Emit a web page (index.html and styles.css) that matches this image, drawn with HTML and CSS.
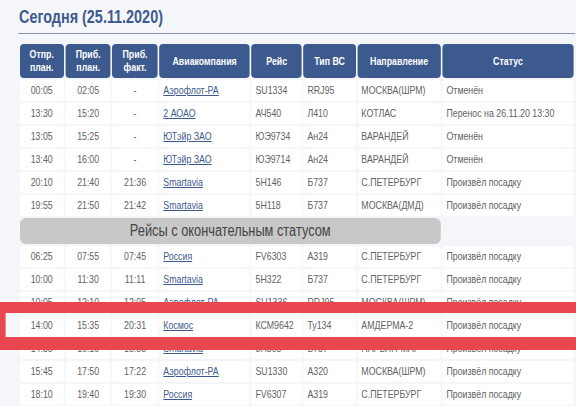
FILE: index.html
```html
<!DOCTYPE html>
<html lang="ru">
<head>
<meta charset="utf-8">
<link rel="stylesheet" href="styles.css">
</head>
<body>
<div class="page">
  <h1 class="title">Сегодня (25.11.2020)</h1>
  <table class="flights">
    <colgroup>
      <col class="c-dep"><col class="c-arr"><col class="c-fact"><col class="c-air"><col class="c-fl"><col class="c-type"><col class="c-dir"><col class="c-st">
    </colgroup>
    <thead>
      <tr>
        <th>Отпр.<br>план.</th><th>Приб.<br>план.</th><th>Приб.<br>факт.</th><th>Авиакомпания</th><th>Рейс</th><th>Тип ВС</th><th>Направление</th><th>Статус</th>
      </tr>
    </thead>
    <tbody>
      <tr><td class="t">00:05</td><td class="t">02:05</td><td class="t">-</td><td><a href="#">Аэрофлот-РА</a></td><td>SU1334</td><td>RRJ95</td><td>МОСКВА(ШРМ)</td><td>Отменён</td></tr>
      <tr><td class="t">13:30</td><td class="t">15:20</td><td class="t">-</td><td><a href="#">2 АОАО</a></td><td>АЧ540</td><td>Л410</td><td>КОТЛАС</td><td>Перенос на 26.11.20 13:30</td></tr>
      <tr><td class="t">13:05</td><td class="t">15:25</td><td class="t">-</td><td><a href="#">ЮТэйр ЗАО</a></td><td>ЮЭ9734</td><td>Ан24</td><td>ВАРАНДЕЙ</td><td>Отменён</td></tr>
      <tr><td class="t">13:40</td><td class="t">16:00</td><td class="t">-</td><td><a href="#">ЮТэйр ЗАО</a></td><td>ЮЭ9714</td><td>Ан24</td><td>ВАРАНДЕЙ</td><td>Отменён</td></tr>
      <tr><td class="t">20:10</td><td class="t">21:40</td><td class="t">21:36</td><td><a href="#">Smartavia</a></td><td>5Н146</td><td>Б737</td><td>С.ПЕТЕРБУРГ</td><td>Произвёл посадку</td></tr>
      <tr><td class="t">19:55</td><td class="t">21:50</td><td class="t">21:42</td><td><a href="#">Smartavia</a></td><td>5Н118</td><td>Б737</td><td>МОСКВА(ДМД)</td><td>Произвёл посадку</td></tr>
      <tr class="group"><td colspan="7">Рейсы с окончательным статусом</td><td class="empty"></td></tr>
      <tr><td class="t">06:25</td><td class="t">07:55</td><td class="t">07:45</td><td><a href="#">Россия</a></td><td>FV6303</td><td>А319</td><td>С.ПЕТЕРБУРГ</td><td>Произвёл посадку</td></tr>
      <tr><td class="t">10:00</td><td class="t">11:30</td><td class="t">11:11</td><td><a href="#">Smartavia</a></td><td>5Н322</td><td>Б737</td><td>С.ПЕТЕРБУРГ</td><td>Произвёл посадку</td></tr>
      <tr><td class="t">10:05</td><td class="t">12:10</td><td class="t">12:05</td><td><a href="#">Аэрофлот-РА</a></td><td>SU1336</td><td>RRJ95</td><td>МОСКВА(ШРМ)</td><td>Произвёл посадку</td></tr>
      <tr><td class="t">14:00</td><td class="t">15:35</td><td class="t">20:31</td><td><a href="#">Космос</a></td><td>КСМ9642</td><td>Ту134</td><td>АМДЕРМА-2</td><td>Произвёл посадку</td></tr>
      <tr><td class="t">14:35</td><td class="t">16:10</td><td class="t">15:55</td><td><a href="#">Smartavia</a></td><td>5Н308</td><td>Б737</td><td>НАРЬЯН-МАР</td><td>Произвёл посадку</td></tr>
      <tr><td class="t">15:45</td><td class="t">17:50</td><td class="t">17:22</td><td><a href="#">Аэрофлот-РА</a></td><td>SU1330</td><td>А320</td><td>МОСКВА(ШРМ)</td><td>Произвёл посадку</td></tr>
      <tr><td class="t">18:10</td><td class="t">19:40</td><td class="t">19:30</td><td><a href="#">Россия</a></td><td>FV6307</td><td>А319</td><td>С.ПЕТЕРБУРГ</td><td>Произвёл посадку</td></tr>
    </tbody>
  </table>
  <div class="highlight"></div>
</div>
</body>
</html>
```

FILE: styles.css
```css
html, body {
  margin: 0;
  padding: 0;
  background: #f5f6f9;
  overflow: hidden;
}
/* The page is laid out at 720px and narrowed to 576px,
   which gives the condensed lettering of the original. */
.page {
  position: relative;
  width: 720px;
  height: 406px;
  overflow: hidden;
  transform: scaleX(0.8);
  transform-origin: 0 0;
  font-family: "Liberation Sans", Arial, sans-serif;
}
.title {
  margin: 0 0 0 22.5px;
  width: 695px;
  padding: 6px 0 4px 1.25px;
  height: 23px;
  border-bottom: 1px solid #8a93ad;
  font-weight: 700;
  font-size: 18px;
  line-height: 23px;
  color: #3d5a8e;
}
.flights {
  margin: 8px 0 0 22.5px;
  width: 696.25px;
  table-layout: fixed;
  border-collapse: separate;
  border-spacing: 2.5px 2px;
}
.c-dep { width: 55px; }
.c-arr { width: 56.25px; }
.c-fact { width: 56.25px; }
.c-air { width: 112.5px; }
.c-fl { width: 62.5px; }
.c-type { width: 65px; }
.c-dir { width: 103.75px; }
.c-st { width: 162.5px; }
.flights th {
  height: 34px;
  padding: 0;
  background: #3d5a8e;
  color: #fff;
  border-radius: 5px / 4px;
  font-weight: 700;
  font-size: 11px;
  line-height: 13px;
  text-align: center;
  vertical-align: middle;
}
.flights td {
  height: 21px;
  padding: 0 0 0 5px;
  background: #fff;
  border-radius: 3.75px / 3px;
  color: #626262;
  font-size: 11px;
  line-height: 21px;
  white-space: nowrap;
  overflow: hidden;
  vertical-align: middle;
}
.flights td.t {
  padding: 0;
  text-align: center;
}
.flights td a {
  color: #3d5a8e;
  text-decoration: underline;
}
.flights tr.group td {
  height: 26px;
  padding: 0;
  background: #c8c8c8;
  border-radius: 7.5px / 6px;
  color: #444;
  font-size: 16px;
  line-height: 26px;
  text-align: center;
}
.flights tr.group td.empty {
  background: transparent;
}
.highlight {
  position: absolute;
  left: 0;
  top: 302px;
  width: 720px;
  height: 48px;
  box-sizing: border-box;
  border: solid #e9474f;
  border-width: 11px 0 13px 7.5px;
}
```
